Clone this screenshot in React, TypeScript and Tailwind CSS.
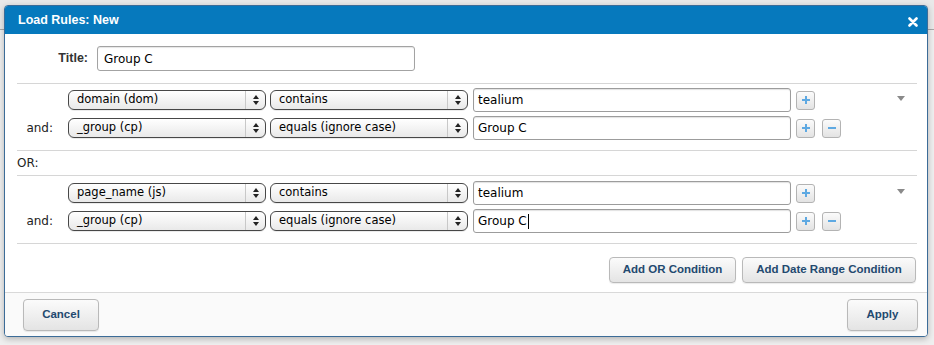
import React from "react";

const arial = { fontFamily: '"Liberation Sans", Arial, sans-serif' };
const lucida = { fontFamily: '"DejaVu Sans", "Liberation Sans", sans-serif' };

function Select({ value }: { value: string }) {
  return (
    <div
      className="flex h-[20px] w-[198px] items-stretch rounded-[6px] border border-[#474747] bg-gradient-to-b from-white to-[#e9e9e9] text-[11.5px] text-black shadow-[0_1px_0_rgba(0,0,0,0.08)]"
      style={lucida}
    >
      <div className="flex flex-1 items-center pl-[8px] leading-none">{value}</div>
      <div className="flex w-[20px] flex-col items-center justify-center gap-[2px] border-l border-[#c8c8c8]">
        <svg width="6" height="4" viewBox="0 0 6 4">
          <path d="M3 0 L6 4 L0 4 Z" fill="#222" />
        </svg>
        <svg width="6" height="4" viewBox="0 0 6 4">
          <path d="M0 0 L6 0 L3 4 Z" fill="#222" />
        </svg>
      </div>
    </div>
  );
}

function TextBox({ value, caret }: { value: string; caret?: boolean }) {
  return (
    <div
      className="flex h-[24px] w-[318px] items-center rounded-[3px] border border-[#9c9c9c] bg-white pl-[4px] text-[12px] text-black shadow-[inset_0_1px_1px_rgba(0,0,0,0.12)]"
      style={lucida}
    >
      {value}
      {caret && <span className="ml-[1px] h-[15px] w-px bg-black" />}
    </div>
  );
}

function SmallBtn({ minus }: { minus?: boolean }) {
  return (
    <div className="flex h-[19px] w-[19px] items-center justify-center rounded-[3px] border border-[#b3b3b3] bg-gradient-to-b from-[#fbfbfb] to-[#e3e3e3]">
      <svg width="10" height="10" viewBox="0 0 10 10">
        {!minus && <rect x="4" y="1" width="2" height="8" fill="#5ea9e2" />}
        <rect x="1" y="4" width="8" height="2" fill="#5ea9e2" />
      </svg>
    </div>
  );
}

function RuleRow({ label, field, op, value, first, caret }: { label?: string; field: string; op: string; value: string; first?: boolean; caret?: boolean }) {
  return (
    <div className="flex items-center">
      <div className="w-[51px] pr-[15px] text-right text-[12px] text-[#222]" style={lucida}>
        {label}
      </div>
      <Select value={field} />
      <div className="w-[4px]" />
      <Select value={op} />
      <div className="w-[5px]" />
      <TextBox value={value} caret={caret} />
      <div className="w-[5px]" />
      <SmallBtn />
      {!first && (
        <>
          <div className="w-[7px]" />
          <SmallBtn minus />
        </>
      )}
      {first && (
        <div className="ml-auto mr-[12px] -mt-[3px]">
          <svg width="8" height="5" viewBox="0 0 8 5">
            <path d="M0 0 L8 0 L4 5 Z" fill="#8a8a8a" />
          </svg>
        </div>
      )}
    </div>
  );
}

function Btn({ children, className }: { children: React.ReactNode; className?: string }) {
  return (
    <div
      className={`flex items-center justify-center rounded-[4px] border border-[#b9b9b9] bg-gradient-to-b from-[#fbfbfb] to-[#e4e4e4] text-[11.5px] font-bold text-[#23496f] shadow-[0_1px_1px_rgba(0,0,0,0.08)] ${className ?? ""}`}
      style={arial}
    >
      {children}
    </div>
  );
}

export default function App() {
  return (
    <div className="relative h-[345px] w-[934px] overflow-hidden bg-[#efefef]">
      <div className="h-[30px] border-b border-[#a8a8a8] bg-[#e9e9e9]" />
      <div className="absolute left-[4px] top-[5px] w-[924px] overflow-hidden rounded-[4px] border border-[#3c6c98] bg-white shadow-[0_2px_6px_rgba(0,0,0,0.25)]">
        <div className="flex h-[28px] items-center justify-between bg-[#0679bd] pl-[13px] pr-[9px] text-white">
          <span className="text-[12.5px] font-bold" style={arial}>
            Load Rules: New
          </span>
          <svg width="10" height="10" viewBox="0 0 10 10" className="mt-[3px]">
            <path d="M1.5 1.5 L8.5 8.5 M8.5 1.5 L1.5 8.5" stroke="white" strokeWidth="2.6" strokeLinecap="round" />
          </svg>
        </div>

        <div className="pl-[12px] pr-[10px]">
          <div className="flex items-center pb-[12px] pt-[12px]">
            <div className="w-[80px] pr-[9px] text-right text-[12.5px] font-bold text-[#333]" style={arial}>
              Title:
            </div>
            <div
              className="flex h-[25px] w-[318px] items-center rounded-[3px] border border-[#a3a3a3] bg-white pl-[6px] text-[12px] text-black shadow-[inset_0_1px_1px_rgba(0,0,0,0.1)]"
              style={lucida}
            >
              Group C
            </div>
          </div>

          <div className="flex flex-col gap-[4px] border-t border-[#d6d6d6] pb-[10px] pt-[4px]">
            <RuleRow field="domain (dom)" op="contains" value="tealium" first />
            <RuleRow label="and:" field="_group (cp)" op="equals (ignore case)" value="Group C" />
          </div>

          <div className="flex h-[25px] items-center border-t border-[#d6d6d6] text-[12px] text-[#222]" style={lucida}>
            OR:
          </div>

          <div className="flex flex-col gap-[4px] border-t border-[#d6d6d6] pb-[10px] pt-[5px]">
            <RuleRow field="page_name (js)" op="contains" value="tealium" first />
            <RuleRow label="and:" field="_group (cp)" op="equals (ignore case)" value="Group C" caret />
          </div>

          <div className="flex justify-end gap-[6px] border-t border-[#d6d6d6] pb-[9px] pr-[1px] pt-[13px]">
            <Btn className="h-[26px] w-[127px]">Add OR Condition</Btn>
            <Btn className="h-[26px] w-[174px]">Add Date Range Condition</Btn>
          </div>
        </div>

        <div className="flex justify-between border-t border-[#d9d9d9] bg-[#fafafa] pb-[5px] pl-[18px] pr-[9px] pt-[6px]">
          <Btn className="h-[32px] w-[76px]">Cancel</Btn>
          <Btn className="h-[32px] w-[71px]">Apply</Btn>
        </div>
      </div>
    </div>
  );
}
